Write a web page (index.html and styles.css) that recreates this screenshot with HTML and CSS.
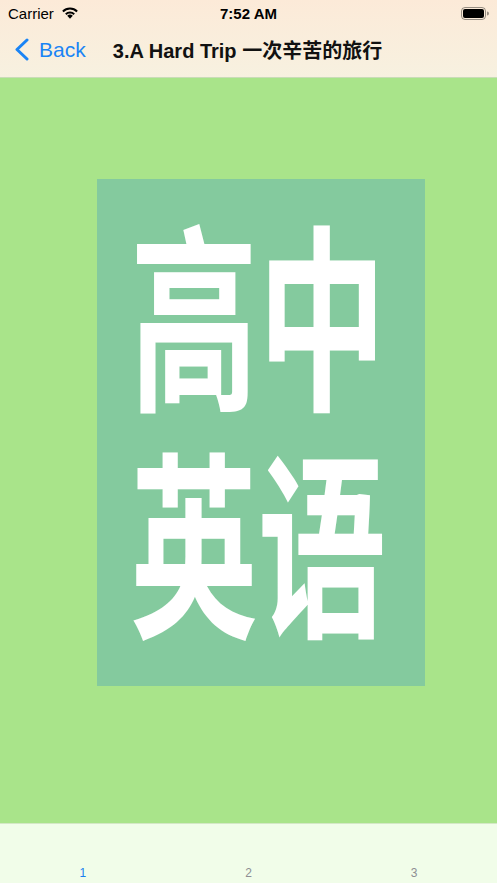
FILE: index.html
```html
<!DOCTYPE html>
<html>
<head>
<meta charset="utf-8">
<link rel="stylesheet" href="styles.css">
</head>
<body>
<div class="app">
  <header class="top">
    <div class="status">
      <div class="st-left">
        <span class="carrier">Carrier</span>
        <svg class="wifi" width="18" height="13" viewBox="0 0 18 13">
          <path d="M9 12.8 L6.2 9.8 A4 4 0 0 1 11.8 9.8 Z" fill="#000"/>
          <path d="M4.1 7.6 A7 7 0 0 1 13.9 7.6 L12.5 9 A5 5 0 0 0 5.5 9 Z" fill="#000"/>
          <path d="M1.2 4.8 A11 11 0 0 1 16.8 4.8 L15.4 6.2 A9 9 0 0 0 2.6 6.2 Z" fill="#000"/>
        </svg>
      </div>
      <div class="time">7:52 AM</div>
      <div class="st-right">
        <svg class="battery" width="28" height="13" viewBox="0 0 28 13">
          <rect x="0.5" y="0.5" width="24" height="12" rx="3.5" fill="none" stroke="#000" stroke-opacity="0.4"/>
          <rect x="2" y="2" width="21" height="9" rx="2" fill="#000"/>
          <path d="M26 4.5 a1.6 1.6 0 0 1 0 4 z" fill="#000" fill-opacity="0.4"/>
        </svg>
      </div>
    </div>
    <nav class="navbar">
      <div class="back">
        <svg width="16" height="23" viewBox="0 0 16 23"><path d="M13 2 L3 11.5 L13 21" fill="none" stroke="#1a84f5" stroke-width="3" stroke-linecap="round" stroke-linejoin="round"/></svg>
        <span>Back</span>
      </div>
      <div class="title">3.A Hard Trip 一次辛苦的旅行</div>
    </nav>
  </header>
  <main class="content">
    <div class="cover">
      <div class="cover-line">高中</div>
      <div class="cover-line">英语</div>
    </div>
  </main>
  <footer class="tabs">
    <div class="tab active">1</div>
    <div class="tab">2</div>
    <div class="tab">3</div>
  </footer>
</div>
</body>
</html>
```
FILE: styles.css
```css
* { box-sizing: border-box; }
html, body { margin: 0; padding: 0; }
body {
  width: 497px;
  height: 883px;
  overflow: hidden;
  font-family: "Liberation Sans", "Noto Sans CJK SC", sans-serif;
}
.app {
  display: flex;
  flex-direction: column;
  height: 883px;
}
.top {
  background: linear-gradient(180deg, #fcead8 0%, #f7f1e0 100%);
  border-bottom: 1px solid #c9dcb8;
  height: 78px;
  flex: none;
}
.status {
  height: 28px;
  display: grid;
  grid-template-columns: 1fr auto 1fr;
  align-items: center;
  padding: 0 8px 0 8px;
}
.st-left { display: flex; align-items: center; gap: 7px; }
.carrier { font-size: 15px; color: #000; margin-top: -2px; }
.wifi { margin-top: -4px; }
.time { font-size: 15px; font-weight: bold; color: #000; margin-top: -2px; }
.st-right { display: flex; justify-content: flex-end; }
.battery { margin-top: -2px; }
.navbar {
  height: 49px;
  position: relative;
  display: flex;
  align-items: center;
}
.back {
  display: flex;
  align-items: center;
  gap: 9px;
  padding-left: 14px;
  color: #1a84f5;
  font-size: 21px;
  margin-top: -6px;
}
.title {
  position: absolute;
  left: 0; right: 0;
  top: 0; bottom: 0;
  display: flex;
  align-items: center;
  justify-content: center;
  font-size: 20px;
  font-weight: bold;
  color: #111;
  margin-top: -6px;
  padding-right: 2px;
  pointer-events: none;
}
.content {
  flex: 1;
  background: #a9e48a;
  display: flex;
  justify-content: flex-start;
  padding-top: 101px;
  padding-left: 97px;
}
.cover {
  width: 328px;
  height: 507px;
  background: #84ca9e;
  display: flex;
  flex-direction: column;
  align-items: center;
  justify-content: center;
  gap: 99px;
}
.cover-line {
  font-family: "Noto Sans CJK SC", sans-serif;
  font-weight: 700;
  font-size: 128px;
  line-height: 128px;
  height: 128px;
  color: #fff;
  transform: scaleY(1.55);
  margin-left: -6px;
  position: relative;
  top: -9px;
}
.tabs {
  flex: none;
  height: 60px;
  background: #f1fde9;
  border-top: 1px solid #d4e8c6;
  display: grid;
  grid-template-columns: 1fr 1fr 1fr;
  align-items: end;
  padding-bottom: 3px;
}
.tab {
  text-align: center;
  font-size: 12px;
  color: #8e8e93;
}
.tab.active { color: #1a7ff0; }
```
